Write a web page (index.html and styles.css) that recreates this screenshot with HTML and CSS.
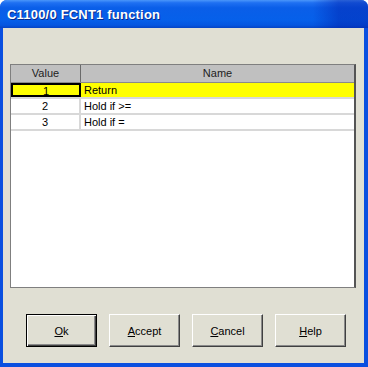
FILE: index.html
```html
<!DOCTYPE html>
<html lang="en">
<head>
  <meta charset="UTF-8" />
  <title>C1100/0 FCNT1 function</title>
  <link rel="stylesheet" href="styles.css">
</head>
<body>

  <!-- Dialog window -->
  <div class="window">
    <div class="titlebar">
      <span class="title">C1100/0 FCNT1 function</span>
    </div>

    <div class="client">
      <!-- Value / Name grid -->
      <div class="grid">
        <div class="grid-row grid-head">
          <div class="cell col-value">Value</div>
          <div class="cell col-name">Name</div>
        </div>
        <div class="grid-row selected">
          <div class="cell col-value focused">1</div>
          <div class="cell col-name">Return</div>
        </div>
        <div class="grid-row">
          <div class="cell col-value">2</div>
          <div class="cell col-name">Hold if &gt;=</div>
        </div>
        <div class="grid-row">
          <div class="cell col-value">3</div>
          <div class="cell col-name">Hold if =</div>
        </div>
      </div>

      <!-- Buttons -->
      <div class="buttons">
        <button class="btn default"><u>O</u>k</button>
        <button class="btn"><u>A</u>ccept</button>
        <button class="btn"><u>C</u>ancel</button>
        <button class="btn"><u>H</u>elp</button>
      </div>
    </div>
  </div>

</body>
</html>
```

FILE: styles.css
```css
* {
  box-sizing: border-box;
}

body {
  margin: 0;
  padding: 0;
  font-family: 'Liberation Sans', Arial, sans-serif;
  font-size: 11px;
  color: #000;
}

.window {
  width: 368px;
  height: 367px;
  display: flex;
  flex-direction: column;
  background: #0a4fe0;
  border-radius: 7px 7px 0 0;
  overflow: hidden;
  padding: 0 4px 4px 3px;
}

/* Title bar */
.titlebar {
  height: 29px;
  margin: 0 -4px 0 -3px;
  padding: 0 7px;
  display: flex;
  align-items: center;
  background:
    linear-gradient(90deg, rgba(0, 0, 0, 0) 85%, rgba(0, 30, 170, 0.45) 92%),
    linear-gradient(180deg, #4a96fa 0%, #1f70f2 10%, #0a5ee8 28%, #0660ea 70%, #0556e0 90%, #0644c4 100%);
}

.title {
  color: #fff;
  font-weight: bold;
  font-size: 13px;
  letter-spacing: 0.2px;
  text-shadow: 1px 1px 0 #0a2a8a;
  padding-top: 1px;
}

/* Client area */
.client {
  flex: 1;
  background: #e0dfd3;
  display: flex;
  flex-direction: column;
  padding: 36px 8px 16px 7px;
}

.grid {
  height: 224px;
  background: #fff;
  border: 1px solid #7f7f7f;
  border-right: 2px solid #555;
}

.grid-row {
  display: flex;
  height: 16px;
  border-bottom: 2px solid #d8d8d8;
}

.cell {
  line-height: 14px;
  white-space: nowrap;
}

.col-value {
  width: 70px;
  text-align: center;
  border-right: 2px solid #d8d8d8;
}

.col-name {
  flex: 1;
  padding-left: 3px;
}

.grid-head {
  height: 18px;
  background: #c0c0c0;
  border-bottom: 1px solid #8a8a8a;
}

.grid-head .cell {
  line-height: 17px;
  color: #222;
}

.grid-head .col-value {
  border-right: 1px solid #6a6a6a;
}

.grid-head .col-name {
  text-align: center;
  padding-left: 0;
}

.selected {
  background: #ffff00;
}

.focused {
  border: 2px solid #000;
  line-height: 12px;
}

/* Buttons */
.buttons {
  margin-top: 26px;
  display: flex;
  gap: 12px;
  padding-left: 16px;
}

.btn {
  width: 71px;
  height: 33px;
  font-family: 'Liberation Sans', Arial, sans-serif;
  font-size: 11px;
  color: #000;
  background: #e0dfd3;
  border: 1px solid;
  border-color: #fff #404040 #404040 #fff;
  box-shadow: inset -1px -1px 0 #8a8a8a;
  padding: 0;
}

.btn.default {
  border: 1px solid #000;
  box-shadow: inset 1px 1px 0 #fff, inset -1px -1px 0 #404040, inset -2px -2px 0 #8a8a8a;
}

.btn u {
  text-decoration: underline;
}
```
